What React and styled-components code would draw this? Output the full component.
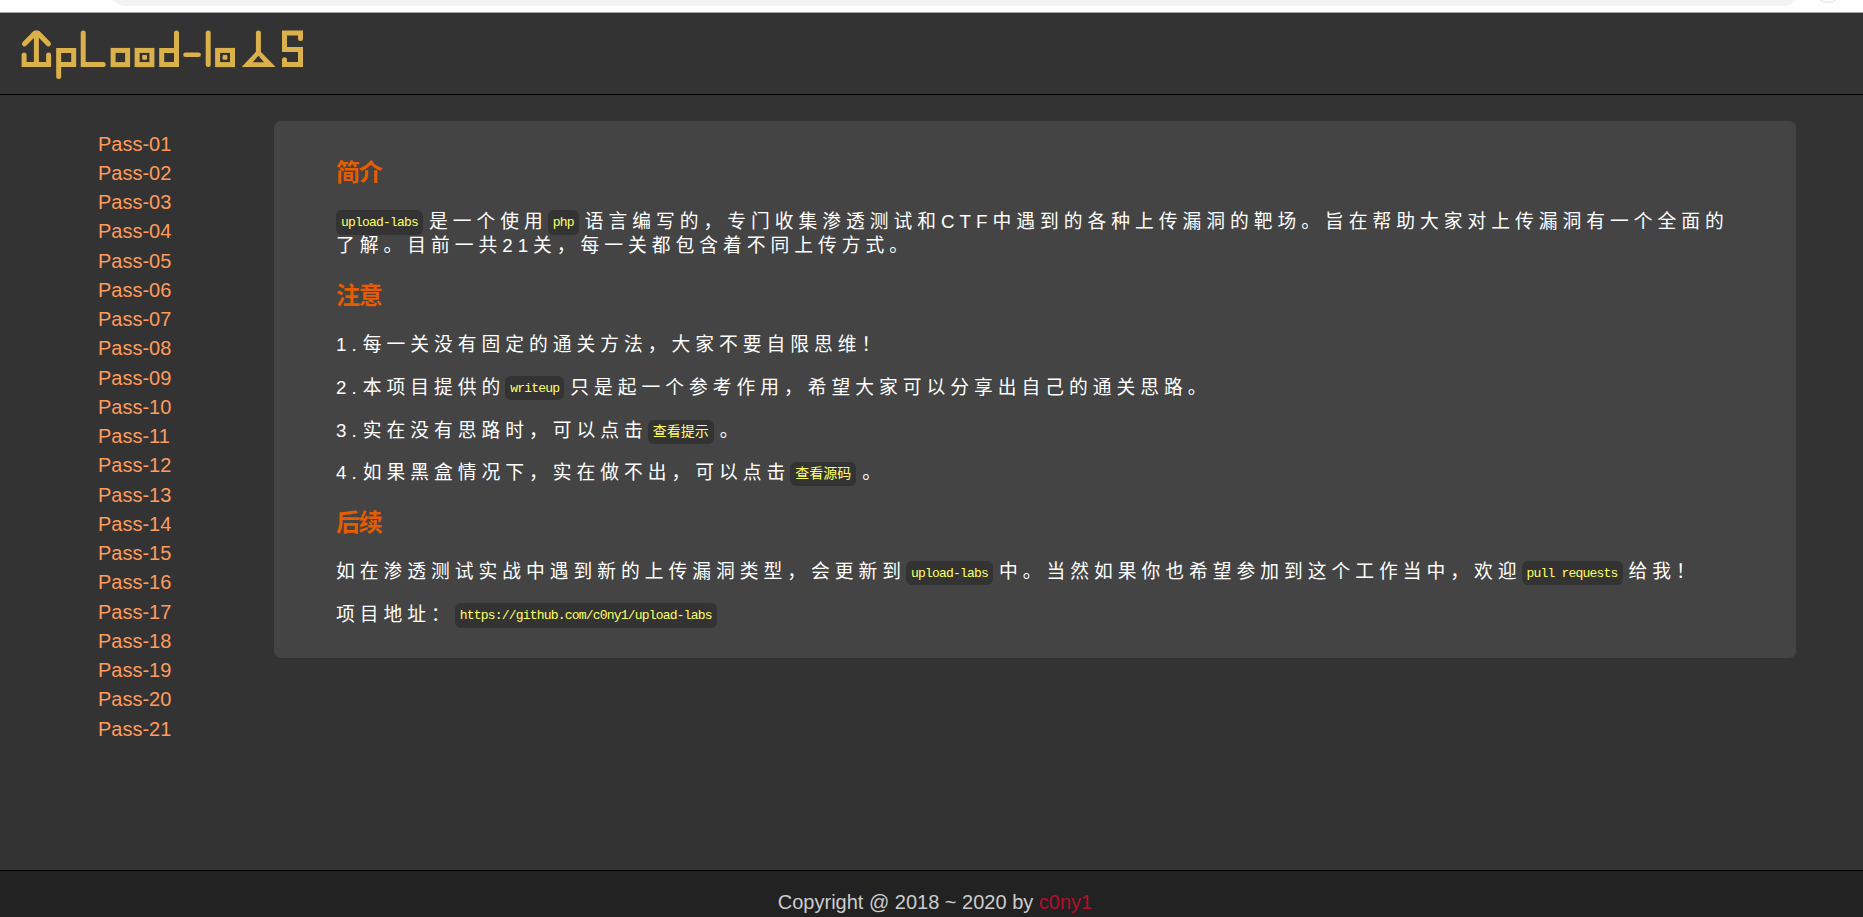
import React from 'react'
import styled, { createGlobalStyle } from 'styled-components';

const passes = Array.from({ length: 21 }, (_, i) => `Pass-${String(i + 1).padStart(2, '0')}`);

const Logo = () => (
    <LogoSvg viewBox="0 0 320 81" role="img" aria-label="upload-labs">
        <g transform="translate(0 -13)" fill="none" stroke="#dbb14b" strokeWidth="5" strokeLinecap="round" strokeLinejoin="miter">
            <polyline points="24.1,55 24.1,64.6 48.6,64.6 48.6,55" />
            <line x1="36.4" y1="34" x2="36.4" y2="64" />
            <polyline points="24.6,43.8 35.2,33 37.8,33 48.3,43.8" strokeWidth="5.2" strokeLinejoin="round" />
            <polyline points="58.7,76.6 58.7,50.4 73.7,50.4 73.7,64.6 58.7,64.6" />
            <polyline points="83.2,33 83.2,64.6 103.2,64.6" />
            <rect x="113.1" y="50.4" width="14.5" height="14.2" />
            <rect x="137.1" y="50.4" width="14.8" height="14.2" />
            <polyline points="176.5,33 176.5,64.6 161.7,64.6 161.7,50.4 176.5,50.4" />
            <line x1="185.4" y1="54.8" x2="198.7" y2="54.8" strokeWidth="4.4" />
            <line x1="208.2" y1="33" x2="208.2" y2="64.5" />
            <rect x="217.6" y="50.4" width="14.9" height="14.2" />
            <line x1="258.4" y1="33" x2="258.4" y2="52" />
            <polygon points="258.4,49.2 241.6,67 275.6,67" fill="#dbb14b" stroke="none" />
            <polygon points="258.4,55.8 252.8,62.2 264,62.2" fill="#333" stroke="none" />
            <polyline points="300.5,38.4 300.5,33 284.5,33 284.5,49.6 300.5,49.6 300.5,64.6 284.5,64.6 284.5,59.8" />
            <rect x="142.2" y="55" width="4.8" height="4.8" rx="1" fill="#dbb14b" stroke="none" />
            <rect x="222.6" y="55" width="4.8" height="4.8" rx="1" fill="#dbb14b" stroke="none" />
        </g>
    </LogoSvg>
)

const App = () => {
    return (
        <>
            <GlobalStyle />
            <Page>
                <BrowserBar>
                    <AddressBar />
                    <Avatar />
                </BrowserBar>
                <Header>
                    <Logo />
                </Header>
                <Main>
                    <Menu>
                        {passes.map((name) => <MenuItem key={name}><MenuLink href="#">{name}</MenuLink></MenuItem>)}
                    </Menu>
                    <Content>
                        <Title>简介</Title>
                        <Text><Code>upload-labs</Code>是一个使用<Code>php</Code>语言编写的，专门收集渗透测试和CTF中遇到的各种上传漏洞的靶场。旨在帮助大家对上传漏洞有一个全面的了解。目前一共21关，每一关都包含着不同上传方式。</Text>
                        <Title>注意</Title>
                        <Text><Num>1.</Num>每一关没有固定的通关方法，大家不要自限思维！</Text>
                        <Text><Num>2.</Num>本项目提供的<Code>writeup</Code>只是起一个参考作用，希望大家可以分享出自己的通关思路。</Text>
                        <Text><Num>3.</Num>实在没有思路时，可以点击<Code $cjk>查看提示</Code>。</Text>
                        <Text><Num>4.</Num>如果黑盒情况下，实在做不出，可以点击<Code $cjk>查看源码</Code>。</Text>
                        <Title>后续</Title>
                        <Text>如在渗透测试实战中遇到新的上传漏洞类型，会更新到<Code>upload-labs</Code>中。当然如果你也希望参加到这个工作当中，欢迎<Code>pull requests</Code>给我！</Text>
                        <Text>项目地址：<Code>https://github.com/c0ny1/upload-labs</Code></Text>
                    </Content>
                </Main>
                <Footer>
                    <span>Copyright @ 2018 ~ 2020 by <Author href="#">c0ny1</Author></span>
                </Footer>
            </Page>
        </>
    )
}

export default App;

const GlobalStyle = createGlobalStyle`
* {
box-sizing: border-box;
}
body {
margin: 0;
background: #333;
font-family: "Liberation Sans", "Noto Sans CJK SC", sans-serif;
}
`
const Page = styled.div`
display: flex;
flex-direction: column;
height: 100vh;
overflow: hidden;
`
const BrowserBar = styled.div`
display: flex;
align-items: flex-end;
flex: none;
height: 13px;
padding: 0 24px 6px 109px;
background: #fff;
border-bottom: 1px solid #a8a8a8;
overflow: hidden;
`
const AddressBar = styled.div`
flex: none;
width: 1691px;
height: 34px;
border-radius: 17px;
background: #f1f3f4;
`
const Avatar = styled.div`
flex: none;
width: 28px;
height: 28px;
margin: 0 0 3px 14px;
border: 1px solid #e2e2e2;
border-radius: 50%;
`
const Header = styled.header`
flex: none;
height: 82px;
border-bottom: 1px solid #000;
`
const LogoSvg = styled.svg`
display: block;
width: 320px;
height: 81px;
`
const Main = styled.main`
display: flex;
flex: 1;
align-items: flex-start;
padding: 26px 67px 0 98px;
`
const Menu = styled.ul`
flex: none;
width: 176px;
margin: 0;
padding: 8.6px 0 0;
list-style: none;
`
const MenuItem = styled.li`
height: 29.25px;
font-size: 20px;
line-height: 29.25px;
`
const MenuLink = styled.a`
color: #ff9b5c;
text-decoration: none;
`
const Content = styled.section`
flex: 1;
height: 537px;
padding: 37px 62px 0;
border-radius: 7px;
background: #444;
`
const Title = styled.h3`
margin: 0 0 22px;
color: #e65c00;
font-size: 24px;
font-weight: 700;
letter-spacing: -1.25px;
line-height: 30px;

p + & {
margin-top: 23px;
}
`
const Text = styled.p`
margin: 0;
color: #fff;
font-size: 18.75px;
letter-spacing: 5px;
line-height: 24px;

& + & {
margin-top: 18.75px;
}
`
const Num = styled.span`
margin-right: 1px;
`
const Code = styled.code`
margin-right: 6px;
padding: ${({ $cjk }) => ($cjk ? '4px 5px' : '4.6px 5px')};
border-radius: 6px;
background: #333;
color: #ff6;
font-family: "Liberation Mono", "Noto Sans CJK SC", monospace;
font-size: ${({ $cjk }) => ($cjk ? '14px' : '13px')};
letter-spacing: ${({ $cjk }) => ($cjk ? '0' : '-0.8px')};
line-height: 0;
vertical-align: ${({ $cjk }) => ($cjk ? '1px' : '2px')};
`
const Footer = styled.footer`
flex: none;
height: 47px;
padding: 20px 0 0 7px;
border-top: 1px solid #000;
background: #222;
color: #ccc;
font-size: 20px;
text-align: center;
`
const Author = styled.a`
color: #b0102a;
text-decoration: none;
`
